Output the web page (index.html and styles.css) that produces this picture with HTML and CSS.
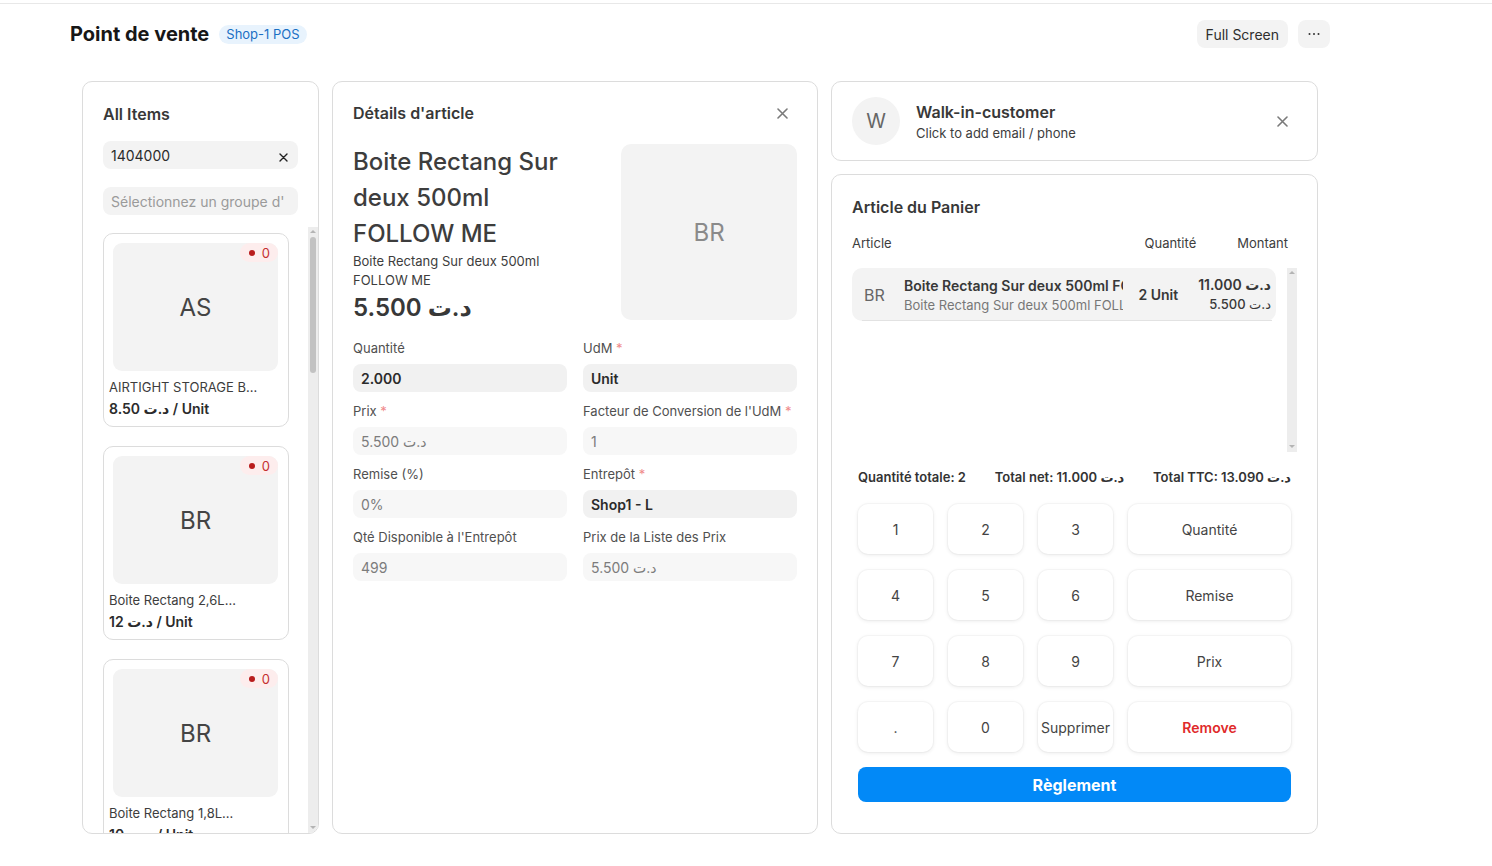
FILE: index.html
```html
<!DOCTYPE html>
<html lang="fr">
<head>
<meta charset="utf-8">
<title>Point de vente</title>
<link rel="stylesheet" href="styles.css">
</head>
<body>
<div class="topline"></div>
<div class="page">
  <header class="header">
    <div class="header-left">
      <h1 class="page-title">Point de vente</h1>
      <span class="pos-badge">Shop-1 POS</span>
    </div>
    <div class="header-right">
      <button class="btn-soft">Full Screen</button>
      <button class="btn-soft btn-icon" aria-label="Plus">
        <svg width="14" height="4" viewBox="0 0 14 4"><circle cx="2.5" cy="2" r="1" fill="#333"/><circle cx="7" cy="2" r="1" fill="#333"/><circle cx="11.5" cy="2" r="1" fill="#333"/></svg>
      </button>
    </div>
  </header>

  <main class="panels">
    <!-- Left: items -->
    <section class="panel items-panel">
      <h2 class="panel-title">All Items</h2>
      <div class="field search-field">
        <span class="field-text">1404000</span>
        <svg class="clear-x" width="9" height="9" viewBox="0 0 9 9"><path d="M1 1l7 7M8 1l-7 7" stroke="#222" stroke-width="1.4" stroke-linecap="round"/></svg>
      </div>
      <div class="field group-field"><span class="placeholder">Sélectionnez un groupe d'</span></div>
      <div class="scroll-area items-area">
        <div class="items-list">
          <div class="item-card">
            <div class="item-thumb">AS<span class="stock-badge"><i class="dot"></i>0</span></div>
            <div class="item-name">AIRTIGHT STORAGE B...</div>
            <div class="item-price">8.50 د.ت / Unit</div>
          </div>
          <div class="item-card">
            <div class="item-thumb">BR<span class="stock-badge"><i class="dot"></i>0</span></div>
            <div class="item-name">Boite Rectang 2,6L...</div>
            <div class="item-price">12 د.ت / Unit</div>
          </div>
          <div class="item-card">
            <div class="item-thumb">BR<span class="stock-badge"><i class="dot"></i>0</span></div>
            <div class="item-name">Boite Rectang 1,8L...</div>
            <div class="item-price">10 د.ت / Unit</div>
          </div>
        </div>
        <div class="vscroll">
          <span class="arrow-up"></span>
          <div class="vscroll-track"><div class="vscroll-thumb"></div></div>
          <span class="arrow-down"></span>
        </div>
      </div>
    </section>

    <!-- Middle: item details -->
    <section class="panel details-panel">
      <div class="panel-head">
        <h2 class="panel-title">Détails d'article</h2>
        <button class="close-btn" aria-label="Fermer">
          <svg width="11" height="11" viewBox="0 0 11 11"><path d="M1 1l9 9M10 1l-9 9" stroke="currentColor" stroke-width="1.6" stroke-linecap="round"/></svg>
        </button>
      </div>
      <div class="details-top">
        <div class="details-info">
          <div class="details-name">Boite Rectang Sur deux 500ml FOLLOW ME</div>
          <div class="details-sub">Boite Rectang Sur deux 500ml FOLLOW ME</div>
          <div class="details-price">5.500 د.ت</div>
        </div>
        <div class="details-thumb">BR</div>
      </div>
      <div class="form-grid">
        <div class="form-cell">
          <label class="form-label">Quantité</label>
          <div class="input input-strong">2.000</div>
        </div>
        <div class="form-cell">
          <label class="form-label">UdM <span class="req">*</span></label>
          <div class="input input-strong">Unit</div>
        </div>
        <div class="form-cell">
          <label class="form-label">Prix <span class="req">*</span></label>
          <div class="input input-muted">5.500 د.ت</div>
        </div>
        <div class="form-cell">
          <label class="form-label">Facteur de Conversion de l'UdM <span class="req">*</span></label>
          <div class="input input-muted">1</div>
        </div>
        <div class="form-cell">
          <label class="form-label">Remise (%)</label>
          <div class="input input-muted">0%</div>
        </div>
        <div class="form-cell">
          <label class="form-label">Entrepôt <span class="req">*</span></label>
          <div class="input input-strong">Shop1 - L</div>
        </div>
        <div class="form-cell">
          <label class="form-label">Qté Disponible à l'Entrepôt</label>
          <div class="input input-muted">499</div>
        </div>
        <div class="form-cell">
          <label class="form-label">Prix de la Liste des Prix</label>
          <div class="input input-muted">5.500 د.ت</div>
        </div>
      </div>
    </section>

    <!-- Right: customer + cart -->
    <div class="right-col">
      <section class="panel customer-card">
        <div class="avatar">W</div>
        <div class="customer-info">
          <div class="customer-name">Walk-in-customer</div>
          <div class="customer-sub">Click to add email / phone</div>
        </div>
        <button class="close-btn" aria-label="Retirer">
          <svg width="11" height="11" viewBox="0 0 11 11"><path d="M1 1l9 9M10 1l-9 9" stroke="currentColor" stroke-width="1.6" stroke-linecap="round"/></svg>
        </button>
      </section>

      <section class="panel cart-panel">
        <h2 class="panel-title">Article du Panier</h2>
        <div class="cart-cols">
          <span class="col-article">Article</span>
          <span class="col-qty">Quantité</span>
          <span class="col-amount">Montant</span>
        </div>
        <div class="scroll-area cart-area">
          <div class="cart-list">
            <div class="cart-row">
              <span class="cart-abbr">BR</span>
              <div class="cart-names">
                <div class="cart-name">Boite Rectang Sur deux 500ml FOLLOW ME</div>
                <div class="cart-desc">Boite Rectang Sur deux 500ml FOLLOW ME</div>
              </div>
              <span class="cart-qty">2 Unit</span>
              <div class="cart-amounts">
                <div class="cart-total">11.000 د.ت</div>
                <div class="cart-rate">5.500 د.ت</div>
              </div>
            </div>
          </div>
          <div class="vscroll">
            <span class="arrow-up"></span>
            <div class="vscroll-track"></div>
            <span class="arrow-down"></span>
          </div>
        </div>
        <div class="totals">
          <span>Quantité totale: 2</span>
          <span>Total net: 11.000 د.ت</span>
          <span>Total TTC: 13.090 د.ت</span>
        </div>
        <div class="keypad">
          <button class="key">1</button>
          <button class="key">2</button>
          <button class="key">3</button>
          <button class="key">Quantité</button>
          <button class="key">4</button>
          <button class="key">5</button>
          <button class="key">6</button>
          <button class="key">Remise</button>
          <button class="key">7</button>
          <button class="key">8</button>
          <button class="key">9</button>
          <button class="key">Prix</button>
          <button class="key">.</button>
          <button class="key">0</button>
          <button class="key">Supprimer</button>
          <button class="key key-danger">Remove</button>
        </div>
        <button class="pay-btn">Règlement</button>
      </section>
    </div>
  </main>
</div>
</body>
</html>
```

FILE: styles.css
```css
* { box-sizing: border-box; }

html, body {
  margin: 0;
  padding: 0;
  background: #ffffff;
}

body {
  font-family: Inter, "DejaVu Sans", sans-serif;
  color: #383838;
  font-size: 14px;
}

button {
  font-family: inherit;
  border: none;
  cursor: pointer;
  padding: 0;
  background: none;
}

.topline {
  height: 4px;
  border-bottom: 1px solid #e8e8e8;
}

.page {
  width: 1260px;
  margin-left: 70px;
}

/* Header */
.header {
  height: 60px;
  display: flex;
  align-items: center;
  justify-content: space-between;
}

.header-left {
  display: flex;
  align-items: center;
  gap: 10px;
}

.page-title {
  margin: 0;
  font-size: 20px;
  font-weight: 700;
  color: #171717;
  line-height: 28px;
}

.pos-badge {
  font-size: 13px;
  line-height: 19px;
  padding: 0 7px;
  border-radius: 10px;
  background: #e8f3fd;
  color: #1a6fc4;
}

.header-right {
  display: flex;
  align-items: center;
  gap: 10px;
}

.btn-soft {
  height: 28px;
  padding: 0 9px;
  border-radius: 8px;
  background: #f3f3f3;
  color: #2e2e2e;
  font-size: 14px;
}

.btn-icon {
  width: 32px;
  display: flex;
  align-items: center;
  justify-content: center;
}

/* Panels */
.panels {
  margin-top: 17px;
  padding: 0 12px;
  display: grid;
  grid-template-columns: 237px 486px minmax(0, 1fr);
  gap: 13px;
  height: 753px;
}

.panel {
  border: 1px solid #dcdcdc;
  border-radius: 10px;
  background: #fff;
  min-width: 0;
}

.panel-title {
  margin: 0;
  font-size: 16px;
  line-height: 24px;
  font-weight: 600;
  color: #383838;
}

/* Fake classic scrollbar */
.scroll-area {
  display: flex;
  min-height: 0;
}

.vscroll {
  width: 10px;
  flex: none;
  background: #ededed;
  display: flex;
  flex-direction: column;
  align-items: center;
}

.vscroll-track {
  flex: 1;
  width: 100%;
  display: flex;
  justify-content: center;
}

.vscroll-thumb {
  width: 6px;
  height: 136px;
  border-radius: 3px;
  background: #c2c2c2;
}

.arrow-up,
.arrow-down {
  flex: none;
  width: 0;
  height: 0;
  margin: 3px 0 4px;
  border-left: 3px solid transparent;
  border-right: 3px solid transparent;
}

.arrow-up {
  border-bottom: 3px solid #b4b4b4;
}

.arrow-down {
  border-top: 3px solid #b4b4b4;
}

/* Left panel */
.items-panel {
  padding: 20px 0 0 20px;
  display: flex;
  flex-direction: column;
  overflow: hidden;
  min-height: 0;
}

.field {
  width: 195px;
  height: 28px;
  border-radius: 8px;
  background: #f3f3f3;
  display: flex;
  align-items: center;
  padding: 0 6px 0 8px;
  font-size: 14px;
  overflow: hidden;
  white-space: nowrap;
}

.search-field {
  margin-top: 15px;
  justify-content: space-between;
  color: #2b2b2b;
}

.search-field .clear-x {
  margin-right: 4px;
  margin-top: 4px;
}

.group-field {
  margin-top: 18px;
}

.placeholder {
  color: #9a9a9a;
}

.items-area {
  margin-top: 12px;
  flex: 1;
}

.items-list {
  flex: 1;
  min-width: 0;
  overflow: hidden;
  padding-top: 6px;
  display: flex;
  flex-direction: column;
  gap: 19px;
}

.item-card {
  width: 186px;
  flex: none;
  border: 1px solid #dcdcdc;
  border-radius: 10px;
  padding: 9px 10px 7px 9px;
}

.item-thumb {
  position: relative;
  height: 128px;
  border-radius: 9px;
  background: #f3f3f3;
  display: flex;
  align-items: center;
  justify-content: center;
  font-size: 24px;
  color: #444;
}

.stock-badge {
  position: absolute;
  top: 0;
  right: 0;
  height: 19px;
  padding: 0 8px 0 9px;
  border-radius: 10px;
  background: #fdeded;
  color: #c42f2f;
  font-size: 13px;
  display: flex;
  align-items: center;
  gap: 7px;
}

.stock-badge .dot {
  width: 6px;
  height: 6px;
  border-radius: 50%;
  background: #b91c1c;
}

.item-name {
  margin: 7px 0 0 -4px;
  font-size: 13px;
  line-height: 18px;
  color: #3d3d3d;
  white-space: nowrap;
}

.item-price {
  margin: 3px 0 0 -4px;
  font-size: 14px;
  line-height: 20px;
  font-weight: 600;
  color: #2b2b2b;
}

/* Middle panel */
.details-panel {
  padding: 19px 20px 20px 20px;
}

.panel-head {
  height: 24px;
  display: flex;
  align-items: center;
  justify-content: space-between;
}

.close-btn {
  width: 30px;
  height: 24px;
  display: flex;
  align-items: center;
  justify-content: center;
  color: #7a7a7a;
}

.details-top {
  margin-top: 19px;
  display: flex;
  justify-content: space-between;
}

.details-info {
  width: 230px;
  flex: none;
}

.details-name {
  font-size: 24px;
  line-height: 36px;
  font-weight: 500;
  color: #3d3d3d;
}

.details-sub {
  font-size: 13px;
  line-height: 19px;
  color: #3d3d3d;
}

.details-price {
  margin-top: 3px;
  font-size: 24px;
  line-height: 30px;
  font-weight: 600;
  color: #383838;
}

.details-thumb {
  width: 176px;
  height: 176px;
  flex: none;
  border-radius: 10px;
  background: #f3f3f3;
  display: flex;
  align-items: center;
  justify-content: center;
  font-size: 24px;
  color: #8a8a8a;
}

.form-grid {
  margin-top: 16px;
  display: grid;
  grid-template-columns: 1fr 1fr;
  column-gap: 16px;
  row-gap: 10px;
}

.form-label {
  display: block;
  font-size: 13px;
  line-height: 18px;
  color: #505050;
  margin-bottom: 7px;
}

.req {
  color: #ef8a8a;
}

.input {
  height: 28px;
  border-radius: 8px;
  padding: 0 8px;
  display: flex;
  align-items: center;
  font-size: 14px;
}

.input-strong {
  background: #f1f1f1;
  color: #2b2b2b;
  font-weight: 600;
}

.input-muted {
  background: #f7f7f7;
  color: #7c7c7c;
}

/* Right column */
.right-col {
  display: flex;
  flex-direction: column;
  gap: 13px;
  min-height: 0;
  min-width: 0;
}

.customer-card {
  height: 80px;
  flex: none;
  padding: 0 20px;
  display: flex;
  align-items: center;
}

.avatar {
  width: 48px;
  height: 48px;
  border-radius: 50%;
  background: #f3f3f3;
  display: flex;
  align-items: center;
  justify-content: center;
  font-size: 20px;
  color: #666;
}

.customer-info {
  flex: 1;
  margin-left: 16px;
}

.customer-name {
  font-size: 16px;
  line-height: 22px;
  font-weight: 600;
  color: #383838;
}

.customer-sub {
  margin-top: 1px;
  font-size: 13px;
  line-height: 18px;
  color: #3d3d3d;
}

.cart-panel {
  flex: 1;
  min-height: 0;
  padding: 20px 20px 31px 20px;
  display: flex;
  flex-direction: column;
}

.cart-cols {
  margin-top: 15px;
  display: flex;
  font-size: 13px;
  line-height: 18px;
  color: #3d3d3d;
  padding-right: 9px;
}

.col-article { flex: 1; }
.col-qty { margin-right: 41px; }

.cart-area {
  margin-top: 16px;
  flex: 1;
}

.cart-list {
  flex: 1;
  min-width: 0;
  overflow: hidden;
}

.cart-row {
  position: relative;
  margin-right: 11px;
  height: 53px;
  border-radius: 10px;
  background: #f3f3f3;
  display: flex;
  align-items: center;
  padding: 0 5px 0 12px;
}

.cart-row::after {
  content: "";
  position: absolute;
  left: 10px;
  right: 4px;
  bottom: 0;
  height: 1px;
  background: #e2e2e2;
}

.cart-abbr {
  width: 28px;
  flex: none;
  font-size: 16px;
  color: #666;
}

.cart-names {
  flex: 1;
  min-width: 0;
  margin-left: 12px;
  overflow: hidden;
  white-space: nowrap;
}

.cart-name {
  font-size: 14px;
  line-height: 20px;
  font-weight: 600;
  color: #383838;
  overflow: hidden;
}

.cart-desc {
  font-size: 13px;
  line-height: 18px;
  color: #777;
  overflow: hidden;
}

.cart-qty {
  margin-left: 15px;
  font-size: 14px;
  font-weight: 600;
  color: #383838;
  white-space: nowrap;
}

.cart-amounts {
  margin-left: 20px;
  text-align: right;
  white-space: nowrap;
}

.cart-total {
  font-size: 14px;
  line-height: 20px;
  font-weight: 600;
  color: #383838;
}

.cart-rate {
  font-size: 13px;
  line-height: 19px;
  font-weight: 500;
  color: #383838;
}

.totals {
  margin: 16px 6px 0 6px;
  display: flex;
  justify-content: space-between;
  font-size: 13px;
  line-height: 18px;
  font-weight: 600;
  color: #333;
}

.keypad {
  margin: 18px 6px 0 6px;
  display: grid;
  grid-template-columns: 75px 75px 75px 1fr;
  grid-auto-rows: 50px;
  column-gap: 15px;
  row-gap: 16px;
}

.key {
  background: #fff;
  border-radius: 10px;
  box-shadow: 0 0 0 1px rgba(0, 0, 0, 0.025), 0 1px 4px rgba(0, 0, 0, 0.09);
  font-size: 14px;
  color: #444;
  white-space: nowrap;
}

.key-danger {
  color: #e02a2a;
  font-weight: 600;
}

.pay-btn {
  margin: 15px 6px 0 6px;
  height: 35px;
  border-radius: 8px;
  background: #0289f7;
  color: #fff;
  font-size: 16px;
  font-weight: 700;
}
```
